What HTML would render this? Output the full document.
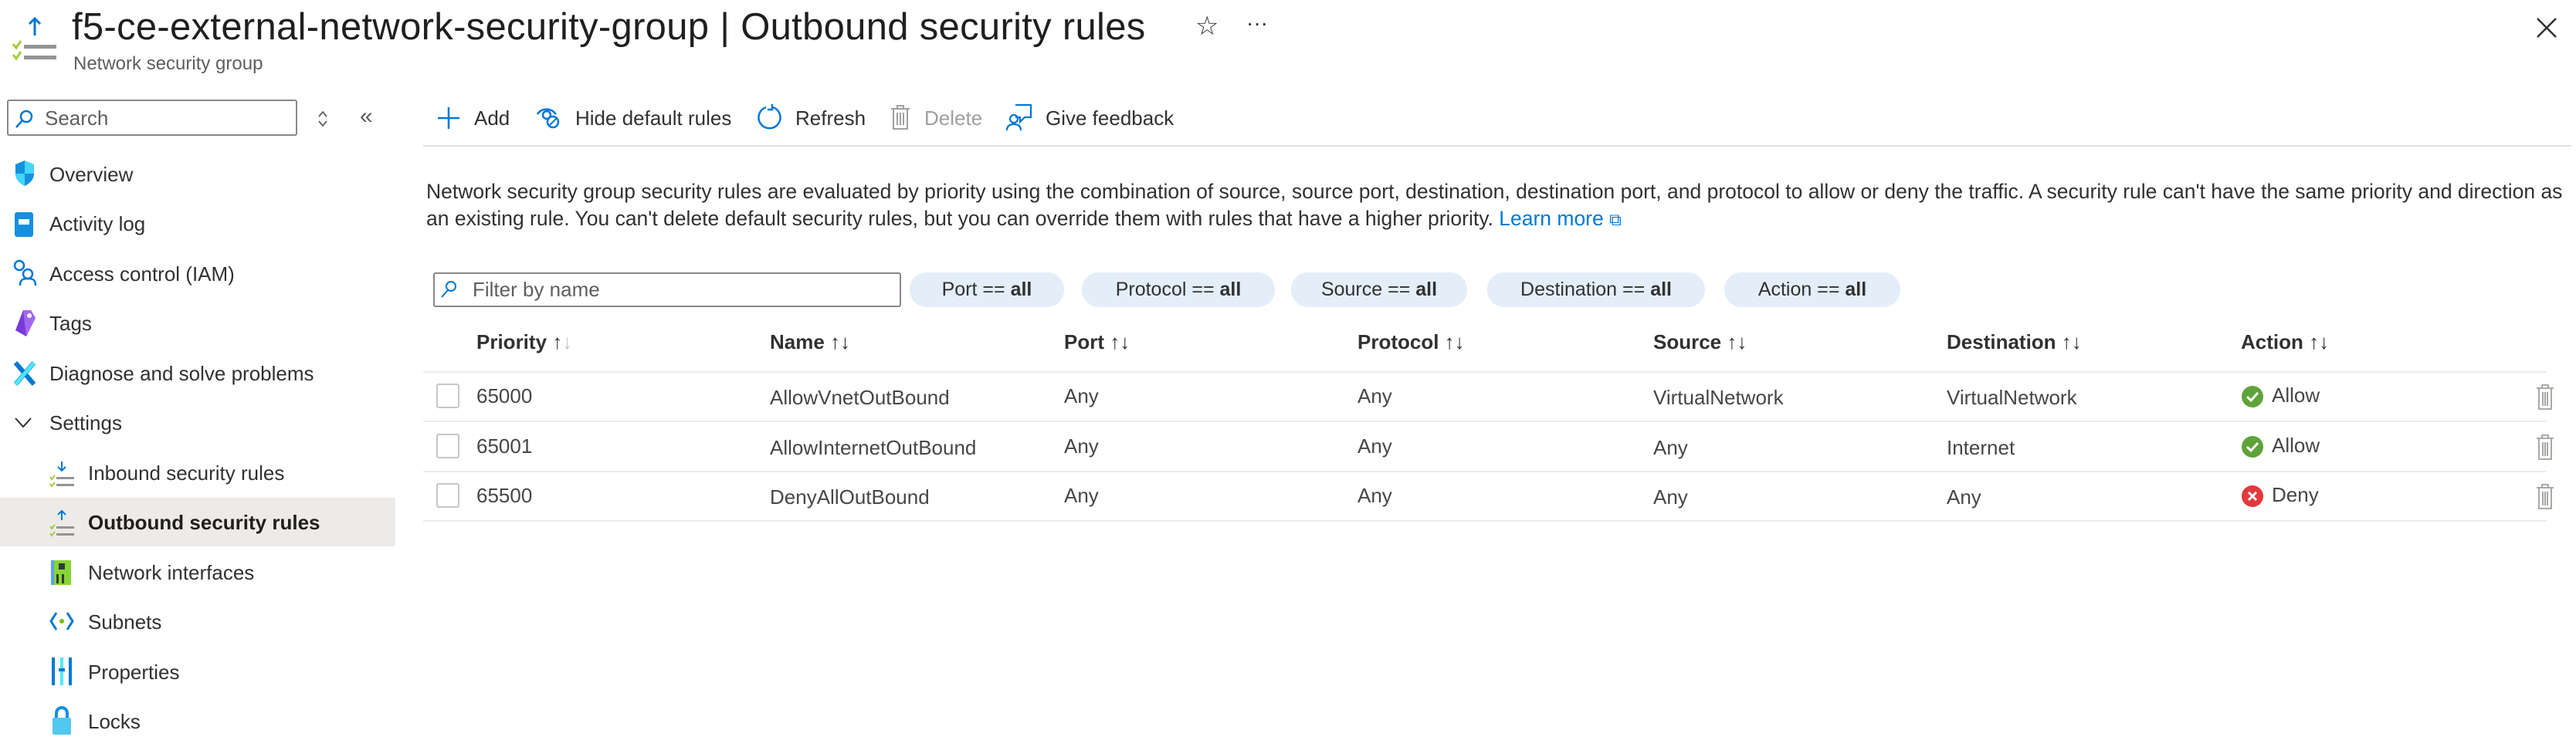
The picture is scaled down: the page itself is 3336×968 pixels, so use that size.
<!DOCTYPE html>
<html><head><meta charset="utf-8"><style>
*{margin:0;padding:0;box-sizing:border-box}
body{width:3336px;height:968px;background:#fff;font-family:"Liberation Sans",sans-serif;color:#323130;position:relative;overflow:hidden}
.a{position:absolute;white-space:nowrap}
.t{font-size:26px;line-height:30px}
.side{font-size:26px;line-height:30px;color:#323130}
.pill{position:absolute;top:353px;height:45px;border-radius:22px;background:#e3eef9;font-size:25px;line-height:45px;text-align:center;color:#323130}
.hd{font-size:26px;font-weight:bold;line-height:30px;color:#323130;top:428px}
.row{position:absolute;left:548px;width:2750px;height:2px;background:#edebe9}
.cb{position:absolute;left:565px;width:30px;height:32px;border:2px solid #c8c6c4;border-radius:3px}
.cell{font-size:26px;color:#484644}
</style></head><body>

<svg class="a" style="left:14px;top:20px" width="62" height="62" viewBox="0 0 62 62">
<path d="M31 4v22M24 11l7-7 7 7" stroke="#0078d4" stroke-width="3" fill="none"/>
<path d="M3 37l4 5 6-9M3 51l4 5 6-9" stroke="#a4cc3c" stroke-width="3" fill="none"/>
<rect x="17" y="38" width="42" height="5" fill="#949494"/><rect x="17" y="52" width="42" height="5" fill="#949494"/>
</svg>
<div class="a" style="left:93px;top:4px;font-size:49px;line-height:62px;color:#201f1e;letter-spacing:0.3px">f5-ce-external-network-security-group | Outbound security rules</div>
<div class="a" style="left:95px;top:68px;font-size:24px;line-height:30px;color:#605e5c">Network security group</div>
<div class="a" style="left:1548px;top:14px;font-size:34px;color:#323130">☆</div>
<div class="a" style="left:1614px;top:14px;font-size:28px;color:#323130">···</div>
<svg class="a" style="left:3284px;top:22px" width="28" height="28"><path d="M2 2L26 26M26 2L2 26" stroke="#323130" stroke-width="2.5"/></svg>

<div class="a" style="left:9px;top:129px;width:376px;height:47px;border:2px solid #8a8886;border-radius:3px"></div>
<svg class="a" style="left:18px;top:141px" width="26" height="26"><circle cx="16" cy="10" r="7" stroke="#0078d4" stroke-width="2.5" fill="none"/><path d="M11 15L3 24" stroke="#0078d4" stroke-width="2.5"/></svg>
<div class="a t" style="left:58px;top:138px;color:#605e5c">Search</div>
<svg class="a" style="left:410px;top:142px" width="16" height="24"><path d="M3 9l5-6 5 6M3 15l5 6 5-6" stroke="#605e5c" stroke-width="1.8" fill="none"/></svg>
<div class="a" style="left:466px;top:134px;font-size:30px;color:#605e5c">«</div>

<svg class="a" style="left:18px;top:206px" width="28" height="36"><path d="M14 2L26 7v12c0 8-6 13-12 16C8 32 2 27 2 19V7z" fill="#1490df"/><path d="M14 2L26 7v12H14zM2 19h12v16C8 32 2 27 2 19z" fill="#50e6ff" opacity=".8"/></svg>
<div class="a side" style="left:64px;top:211px">Overview</div>
<svg class="a" style="left:18px;top:274px" width="26" height="34"><rect x="1" y="1" width="24" height="32" rx="3" fill="#1490df"/><rect x="6" y="10" width="14" height="7" fill="#fff"/></svg>
<div class="a side" style="left:64px;top:275px">Activity log</div>
<svg class="a" style="left:14px;top:335px" width="34" height="36"><circle cx="11" cy="9" r="6" stroke="#0078d4" stroke-width="2.5" fill="none"/><circle cx="22" cy="20" r="6" stroke="#0078d4" stroke-width="2.5" fill="none"/><path d="M12 35c0-8 4-9 10-9s10 1 10 9" stroke="#0078d4" stroke-width="2.5" fill="none"/></svg>
<div class="a side" style="left:64px;top:340px">Access control (IAM)</div>
<svg class="a" style="left:16px;top:400px" width="32" height="38"><path d="M14 2h10l6 10-12 24L4 28z" fill="#773adc"/><path d="M14 2h10l6 10-12 24z" fill="#b77af4" opacity=".7"/><circle cx="22" cy="9" r="3" fill="#fff"/></svg>
<div class="a side" style="left:64px;top:404px">Tags</div>
<svg class="a" style="left:16px;top:466px" width="32" height="36"><path d="M4 4l24 28M28 4L4 32" stroke="#0078d4" stroke-width="6"/><path d="M28 4L4 32" stroke="#50e6ff" stroke-width="5"/></svg>
<div class="a side" style="left:64px;top:469px">Diagnose and solve problems</div>
<svg class="a" style="left:18px;top:538px" width="24" height="20"><path d="M2 4l10 11L22 4" stroke="#323130" stroke-width="2" fill="none"/></svg>
<div class="a side" style="left:64px;top:533px">Settings</div>

<svg class="a" style="left:62px;top:596px" width="36" height="36"><path d="M18 2v12M13 9l5 5 5-5" stroke="#0078d4" stroke-width="2" fill="none"/><path d="M3 22l2 3 4-5M3 31l2 3 4-5" stroke="#a4cc3c" stroke-width="2" fill="none"/><rect x="11" y="22" width="23" height="3" fill="#949494"/><rect x="11" y="31" width="23" height="3" fill="#949494"/></svg>
<div class="a side" style="left:114px;top:598px">Inbound security rules</div>
<div class="a" style="left:0;top:645px;width:512px;height:63px;background:#edebe9"></div>
<svg class="a" style="left:62px;top:660px" width="36" height="36"><path d="M18 14V2M13 7l5-5 5 5" stroke="#0078d4" stroke-width="2" fill="none"/><path d="M3 22l2 3 4-5M3 31l2 3 4-5" stroke="#a4cc3c" stroke-width="2" fill="none"/><rect x="11" y="22" width="23" height="3" fill="#949494"/><rect x="11" y="31" width="23" height="3" fill="#949494"/></svg>
<div class="a side" style="left:114px;top:662px;font-weight:bold;color:#201f1e">Outbound security rules</div>
<svg class="a" style="left:64px;top:724px" width="30" height="36"><rect x="2" y="2" width="26" height="32" fill="#5ea0ef"/><rect x="6" y="2" width="22" height="32" fill="#86d633"/><rect x="12" y="6" width="8" height="8" fill="#32383e"/><rect x="9" y="20" width="3" height="12" fill="#32383e"/><rect x="16" y="20" width="3" height="12" fill="#32383e"/></svg>
<div class="a side" style="left:114px;top:727px">Network interfaces</div>
<svg class="a" style="left:64px;top:790px" width="32" height="30"><path d="M9 4L2 15l7 11M23 4l7 11-7 11" stroke="#0078d4" stroke-width="3" fill="none"/><circle cx="16" cy="15" r="3" fill="#7fba00"/></svg>
<div class="a side" style="left:114px;top:791px">Subnets</div>
<svg class="a" style="left:66px;top:850px" width="28" height="40"><rect x="1" y="2" width="4" height="36" fill="#0078d4"/><rect x="12" y="2" width="4" height="36" fill="#50e6ff"/><rect x="23" y="2" width="4" height="36" fill="#0078d4"/><rect x="10" y="16" width="8" height="4" fill="#0078d4"/></svg>
<div class="a side" style="left:114px;top:856px">Properties</div>
<svg class="a" style="left:66px;top:914px" width="28" height="40"><path d="M7 16V10a7 7 0 0 1 14 0v6" stroke="#1490df" stroke-width="4" fill="none"/><rect x="2" y="16" width="24" height="22" rx="2" fill="#50c8f0"/></svg>
<div class="a side" style="left:114px;top:920px">Locks</div>

<svg class="a" style="left:566px;top:138px" width="30" height="30"><path d="M15 1v28M1 15h28" stroke="#0078d4" stroke-width="2.5"/></svg>
<div class="a t" style="left:614px;top:138px">Add</div>
<svg class="a" style="left:694px;top:136px" width="34" height="32"><path d="M2 12c5-8 17-9 24 0" stroke="#0078d4" stroke-width="2.5" fill="none"/><circle cx="14" cy="13" r="5" stroke="#0078d4" stroke-width="2.5" fill="none"/><circle cx="22" cy="22" r="7" stroke="#0078d4" stroke-width="2.5" fill="#fff"/><path d="M17 27l10-10" stroke="#0078d4" stroke-width="2"/></svg>
<div class="a t" style="left:745px;top:138px">Hide default rules</div>
<svg class="a" style="left:980px;top:134px" width="34" height="36"><path d="M21 5A14 14 0 1 1 12 5" stroke="#0078d4" stroke-width="2.5" fill="none"/><path d="M20 1v7h-6" stroke="#0078d4" stroke-width="2.5" fill="none"/></svg>
<div class="a t" style="left:1030px;top:138px">Refresh</div>
<svg class="a" style="left:1151px;top:134px" width="30" height="36"><path d="M3 7h24M11 7V3h8v4M6 7v26h18V7M11 12v16M15 12v16M19 12v16" stroke="#a19f9d" stroke-width="2" fill="none"/></svg>
<div class="a t" style="left:1197px;top:138px;color:#a19f9d">Delete</div>
<svg class="a" style="left:1303px;top:134px" width="36" height="36"><path d="M12 2h20v16h-8l-6 6v-6h-6" stroke="#0078d4" stroke-width="2.2" fill="none"/><circle cx="10" cy="20" r="5" stroke="#0078d4" stroke-width="2.2" fill="none"/><path d="M1 35c0-6 4-8 9-8s9 2 9 8" stroke="#0078d4" stroke-width="2.2" fill="none"/></svg>
<div class="a t" style="left:1354px;top:138px">Give feedback</div>
<div class="a" style="left:548px;top:188px;width:2782px;height:2px;background:#e1dfdd"></div>

<div class="a" style="left:552px;top:231px;font-size:26.5px;line-height:35px;color:#323130">Network security group security rules are evaluated by priority using the combination of source, source port, destination, destination port, and protocol to allow or deny the traffic. A security rule can't have the same priority and direction as<br>an existing rule. You can't delete default security rules, but you can override them with rules that have a higher priority. <span style="color:#0078d4">Learn more</span> <span style="color:#0078d4;font-size:22px">⧉</span></div>

<div class="a" style="left:561px;top:353px;width:606px;height:45px;border:2px solid #8a8886;border-radius:3px"></div>
<svg class="a" style="left:569px;top:362px" width="24" height="26"><circle cx="15" cy="9" r="6" stroke="#0078d4" stroke-width="2" fill="none"/><path d="M11 14L3 23" stroke="#0078d4" stroke-width="2"/></svg>
<div class="a t" style="left:612px;top:360px;color:#605e5c">Filter by name</div>
<div class="pill" style="left:1178px;width:200px">Port == <b>all</b></div>
<div class="pill" style="left:1401px;width:250px">Protocol == <b>all</b></div>
<div class="pill" style="left:1672px;width:228px">Source == <b>all</b></div>
<div class="pill" style="left:1926px;width:282px">Destination == <b>all</b></div>
<div class="pill" style="left:2233px;width:228px">Action == <b>all</b></div>

<div class="a hd" style="left:617px">Priority <span style="font-weight:normal">↑<span style="color:#c8c6c4">↓</span></span></div>
<div class="a hd" style="left:997px">Name <span style="font-weight:normal">↑↓</span></div>
<div class="a hd" style="left:1378px">Port <span style="font-weight:normal">↑↓</span></div>
<div class="a hd" style="left:1758px">Protocol <span style="font-weight:normal">↑↓</span></div>
<div class="a hd" style="left:2141px">Source <span style="font-weight:normal">↑↓</span></div>
<div class="a hd" style="left:2521px">Destination <span style="font-weight:normal">↑↓</span></div>
<div class="a hd" style="left:2902px">Action <span style="font-weight:normal">↑↓</span></div>
<div class="row" style="top:481px"></div>
<div class="row" style="top:545px"></div>
<div class="row" style="top:610px"></div>
<div class="row" style="top:674px"></div>

<div class="cb" style="top:497px"></div>
<div class="cb" style="top:562px"></div>
<div class="cb" style="top:626px"></div>

<div class="a cell" style="left:617px;top:498px">65000</div>
<div class="a cell" style="left:997px;top:500px">AllowVnetOutBound</div>
<div class="a cell" style="left:1378px;top:498px">Any</div>
<div class="a cell" style="left:1758px;top:498px">Any</div>
<div class="a cell" style="left:2141px;top:500px">VirtualNetwork</div>
<div class="a cell" style="left:2521px;top:500px">VirtualNetwork</div>
<svg class="a" style="left:2902px;top:499px" width="30" height="30"><circle cx="15" cy="15" r="14" fill="#5ea33a"/><path d="M8 15l5 5 9-10" stroke="#fff" stroke-width="3" fill="none"/></svg>
<div class="a cell" style="left:2942px;top:497px">Allow</div>

<div class="a cell" style="left:617px;top:563px">65001</div>
<div class="a cell" style="left:997px;top:565px">AllowInternetOutBound</div>
<div class="a cell" style="left:1378px;top:563px">Any</div>
<div class="a cell" style="left:1758px;top:563px">Any</div>
<div class="a cell" style="left:2141px;top:565px">Any</div>
<div class="a cell" style="left:2521px;top:565px">Internet</div>
<svg class="a" style="left:2902px;top:564px" width="30" height="30"><circle cx="15" cy="15" r="14" fill="#5ea33a"/><path d="M8 15l5 5 9-10" stroke="#fff" stroke-width="3" fill="none"/></svg>
<div class="a cell" style="left:2942px;top:562px">Allow</div>

<div class="a cell" style="left:617px;top:627px">65500</div>
<div class="a cell" style="left:997px;top:629px">DenyAllOutBound</div>
<div class="a cell" style="left:1378px;top:627px">Any</div>
<div class="a cell" style="left:1758px;top:627px">Any</div>
<div class="a cell" style="left:2141px;top:629px">Any</div>
<div class="a cell" style="left:2521px;top:629px">Any</div>
<svg class="a" style="left:2902px;top:628px" width="30" height="30"><circle cx="15" cy="15" r="14" fill="#e1393e"/><path d="M10 10l10 10M20 10L10 20" stroke="#fff" stroke-width="3"/></svg>
<div class="a cell" style="left:2942px;top:626px">Deny</div>

<svg class="a" style="left:3282px;top:496px" width="28" height="36"><path d="M3 7h22M10 7V3h8v4M6 7v27h16V7M11 12v18M14 12v18M17 12v18" stroke="#a19f9d" stroke-width="1.8" fill="none"/></svg>
<svg class="a" style="left:3282px;top:561px" width="28" height="36"><path d="M3 7h22M10 7V3h8v4M6 7v27h16V7M11 12v18M14 12v18M17 12v18" stroke="#a19f9d" stroke-width="1.8" fill="none"/></svg>
<svg class="a" style="left:3282px;top:625px" width="28" height="36"><path d="M3 7h22M10 7V3h8v4M6 7v27h16V7M11 12v18M14 12v18M17 12v18" stroke="#a19f9d" stroke-width="1.8" fill="none"/></svg>
</body></html>
